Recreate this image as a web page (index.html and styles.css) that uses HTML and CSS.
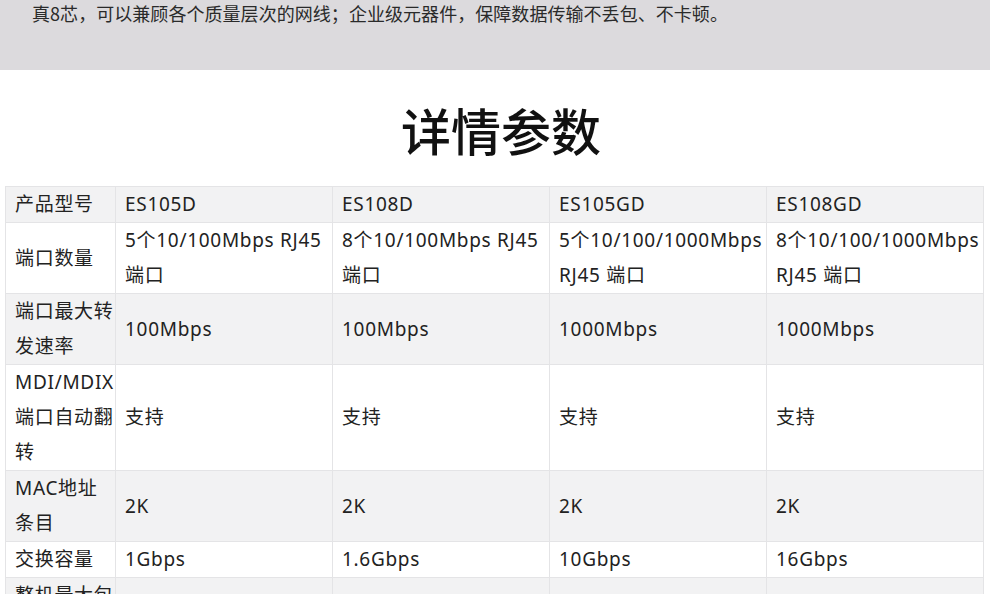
FILE: index.html
```html
<!DOCTYPE html>
<html lang="zh-CN">
<head>
<meta charset="utf-8">
<title>详情参数</title>
<link rel="stylesheet" href="styles.css">
</head>
<body>
<div class="band">
  <p class="band-text">真8芯，可以兼顾各个质量层次的网线；企业级元器件，保障数据传输不丢包、不卡顿。</p>
</div>
<h1 class="title">详情参数</h1>
<table class="spec">
  <colgroup>
    <col class="c-label">
    <col class="c-val"><col class="c-val"><col class="c-val"><col class="c-val">
  </colgroup>
  <tr class="alt">
    <td>产品型号</td><td>ES105D</td><td>ES108D</td><td>ES105GD</td><td>ES108GD</td>
  </tr>
  <tr>
    <td>端口数量</td>
    <td>5个10/100Mbps RJ45<br>端口</td>
    <td>8个10/100Mbps RJ45<br>端口</td>
    <td>5个10/100/1000Mbps<br>RJ45 端口</td>
    <td>8个10/100/1000Mbps<br>RJ45 端口</td>
  </tr>
  <tr class="alt">
    <td>端口最大转<br>发速率</td><td>100Mbps</td><td>100Mbps</td><td>1000Mbps</td><td>1000Mbps</td>
  </tr>
  <tr>
    <td>MDI/MDIX<br>端口自动翻<br>转</td><td>支持</td><td>支持</td><td>支持</td><td>支持</td>
  </tr>
  <tr class="alt">
    <td>MAC地址<br>条目</td><td>2K</td><td>2K</td><td>2K</td><td>2K</td>
  </tr>
  <tr>
    <td>交换容量</td><td>1Gbps</td><td>1.6Gbps</td><td>10Gbps</td><td>16Gbps</td>
  </tr>
  <tr class="alt">
    <td>整机最大包<br>转发率</td><td>1.488Mpps</td><td>1.488Mpps</td><td>7.44Mpps</td><td>11.9Mpps</td>
  </tr>
</table>
</body>
</html>
```

FILE: styles.css
```css
html, body {
  margin: 0;
  padding: 0;
  background: #ffffff;
  overflow: hidden;
}
body {
  font-family: "Noto Sans", "Noto Sans CJK SC", sans-serif;
  color: #222222;
}
.band {
  height: 70px;
  background: #dcdadd;
  padding-left: 32px;
  box-sizing: border-box;
}
.band-text {
  margin: 0;
  font-family: "Noto Sans CJK SC", sans-serif;
  font-size: 18px;
  line-height: 26px;
  color: #2a2a2a;
  letter-spacing: 0.05px;
}
.title {
  margin: 0;
  height: 116px;
  line-height: 118px;
  padding-left: 12px;
  text-align: center;
  font-family: "Noto Sans CJK SC", sans-serif;
  font-weight: 500;
  font-size: 50px;
  color: #111111;
}
.spec {
  margin-left: 5px;
  width: 978px;
  border-collapse: collapse;
  table-layout: fixed;
  font-size: 19px;
  line-height: 35px;
  letter-spacing: 0.7px;
}
.c-label { width: 110px; }
.c-val { width: 217px; }
.spec td {
  border: 1px solid #e4e4e6;
  padding: 0 0 0 9px;
  vertical-align: middle;
  white-space: nowrap;
}
.spec tr.alt td {
  background: #f2f2f3;
}
```
